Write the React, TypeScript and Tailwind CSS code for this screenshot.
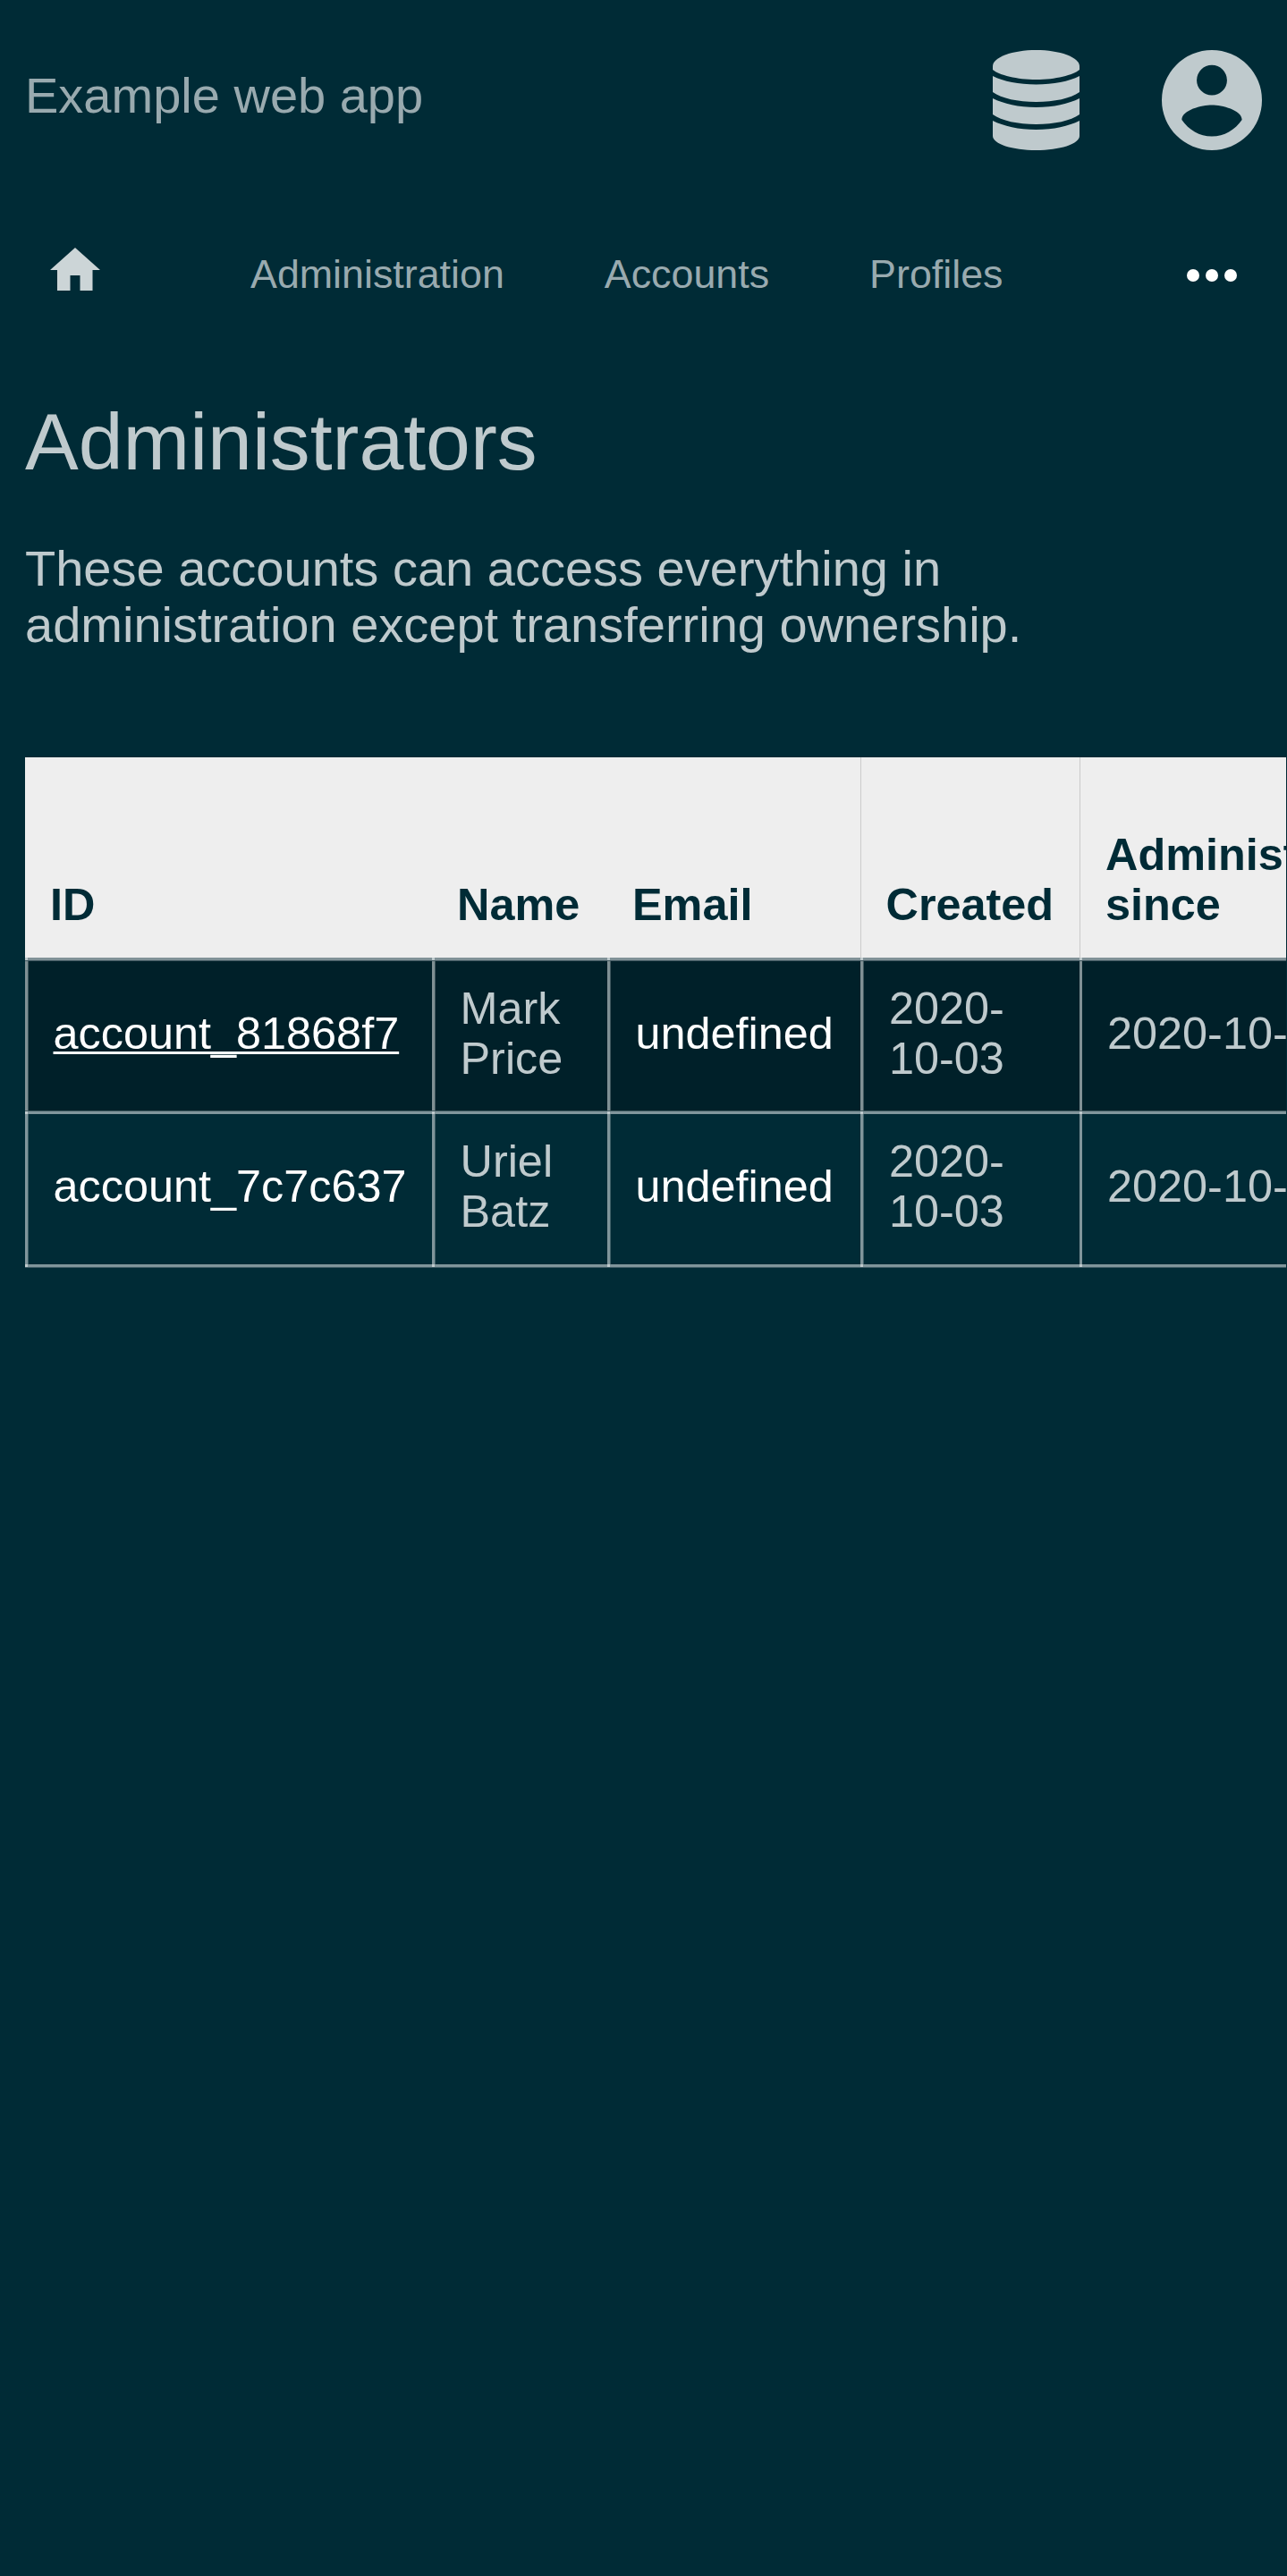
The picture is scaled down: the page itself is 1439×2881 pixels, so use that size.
import type { ReactNode } from 'react';

const rows = [
  { id: 'account_81868f7', first: 'Mark', last: 'Price', dark: true },
  { id: 'account_7c7c637', first: 'Uriel', last: 'Batz', dark: false },
];

const cols = 'grid grid-cols-[455px_196px_283px_245px_231px]';

// Horizontal rule of the table, with brighter joints where it meets the column rules.
function Rule({ soft }: { soft: 'above' | 'below' }) {
  return (
    <div className={`${cols} h-[4px]`}>
      {[0, 1, 2, 3, 4].map((i) => (
        <div
          key={i}
          className={`flex ${soft === 'above' ? 'border-t border-[#40595f] bg-[#80959b]' : 'border-b border-[#40575f] bg-[#809197]'}`}
        >
          <div className="w-[3px] bg-[#bfcacd]" />
        </div>
      ))}
    </div>
  );
}

function Cell({ className, children }: { className: string; children: ReactNode }) {
  return (
    <div className="flex items-start border-l-[3px] border-white/50">
      <div className="w-px self-stretch bg-white/25" />
      <div className={className}>{children}</div>
    </div>
  );
}

export default function App() {
  return (
    <div className="h-[2881px] w-[1439px] overflow-hidden bg-[#002b36] font-['Liberation_Sans',sans-serif] text-[56px] leading-[63px] text-[#bfcacd]">
      <header className="flex h-[224px] items-start justify-between px-[28px] pt-[56px]">
        <h1 className="mt-[19px] text-[#99aaaf]">Example web app</h1>
        <div className="flex gap-[85px]">
          <svg className="h-[112px] w-[112px]" viewBox="0 0 112 112" fill="#bfcacd">
            <path d="M8 18C8 8 30 0 56.500 0S105 8 105 18v4C98 28 78 33 56.500 33S15 28 8 22z" />
            <path d="M8 29C20 35 37 38.500 56.500 38.500S93 35 105 29v18C95 54 77 58 56.500 58S18 54 8 47z" />
            <path d="M8 54C20 60 37 64 56.500 64S93 60 105 54v18C95 79 77 83 56.500 83S18 79 8 72z" />
            <path d="M8 79C20 85 37 89 56.500 89S93 85 105 79v17c0 9-22 16-48.500 16S8 105 8 96z" />
          </svg>
          <svg className="h-[112px] w-[112px]" viewBox="0 0 496 496" fill="#bfcacd">
            <path
              fillRule="evenodd"
              d="M248 0a248 248 0 1 0 0 496a248 248 0 1 0 0-496zm0 74a75 75 0 1 1 0 150a75 75 0 1 1 0-150zm0 353c-62 0-114-32-149-82c1-49 99-73 149-73s148 24 149 73c-35 50-87 82-149 82z"
            />
          </svg>
        </div>
      </header>

      <nav className="flex h-[168px] items-start text-[44.8px] leading-[50px] text-[#99aaaf]">
        <svg className="ml-[56px] mt-[53px] h-[48px] w-[56px]" viewBox="0 0 56 48" fill="#ccd5d7">
          <path d="M28 0L56 25H47.500V48H33.500V31H22.500V48H8V25H0z" />
        </svg>
        <a className="ml-[168px] mt-[57px]">Administration</a>
        <a className="ml-[112px] mt-[57px]">Accounts</a>
        <a className="ml-[112px] mt-[57px]">Profiles</a>
        <svg className="ml-auto mr-[56.5px] mt-[77px] h-[14px] w-[56px]" viewBox="0 0 56 14" fill="white">
          <circle cx="7" cy="7" r="7" />
          <circle cx="28" cy="7" r="7" />
          <circle cx="49" cy="7" r="7" />
        </svg>
      </nav>

      <main className="pl-[28px] pt-[52px]">
        <h2 className="text-[89.6px] leading-[100px]">Administrators</h2>
        <p className="mt-[60px] w-[1200px]">
          These accounts can access everything in administration except transferring ownership.
        </p>
        <section className="mt-[117px] w-[1410px] overflow-hidden text-[50.4px] leading-[56px]">
          <div className={`${cols} h-[224px] items-stretch bg-[#eeeeee] font-bold text-[#002b36]`}>
            <div className="flex items-end pb-[31px] pl-[28px]">ID</div>
            <div className="flex items-end pb-[31px] pl-[28px]">Name</div>
            <div className="flex items-end pb-[31px] pl-[28px]">Email</div>
            <div className="flex items-end border-l border-[#cbcbcb] pb-[31px] pl-[27.5px]">Created</div>
            <div className="flex items-end border-l border-[#cbcbcb] pb-[31px] pl-[28px]">
              <span>
                Administrator
                <br />
                since
              </span>
            </div>
          </div>
          {rows.map((r) => (
            <div key={r.id}>
              <Rule soft={r.dark ? 'below' : 'above'} />
              <div className={`${cols} ${r.dark ? 'h-[167px] bg-[#002029] pt-0' : 'h-[168px] bg-[#002b36]'}`}>
                <Cell className={r.dark ? 'pl-[27.5px] pt-[53px] text-white' : 'pl-[27.5px] pt-[53px] text-white'}>
                  <span
                    className={
                      r.dark ? 'underline decoration-[3px] underline-offset-[3px] [text-decoration-skip-ink:none]' : ''
                    }
                  >
                    {r.id}
                  </span>
                </Cell>
                <Cell className="pl-[27.5px] pt-[25px]">
                  {r.first}
                  <br />
                  {r.last}
                </Cell>
                <Cell className="pl-[27.5px] pt-[53px] text-white">undefined</Cell>
                <Cell className="pl-[28px] pt-[25px]">
                  2020-
                  <br />
                  10-03
                </Cell>
                <Cell className="whitespace-nowrap pl-[28px] pt-[53px]">2020-10-03</Cell>
              </div>
            </div>
          ))}
          <div className={`${cols} h-[4px]`}>
            {[0, 1, 2, 3, 4].map((i) => (
              <div key={i} className="flex border-b border-[#405e68] bg-[#80959b]">
                <div className="w-[3px] bg-[#bfcacd]" />
              </div>
            ))}
          </div>
        </section>
      </main>
    </div>
  );
}
